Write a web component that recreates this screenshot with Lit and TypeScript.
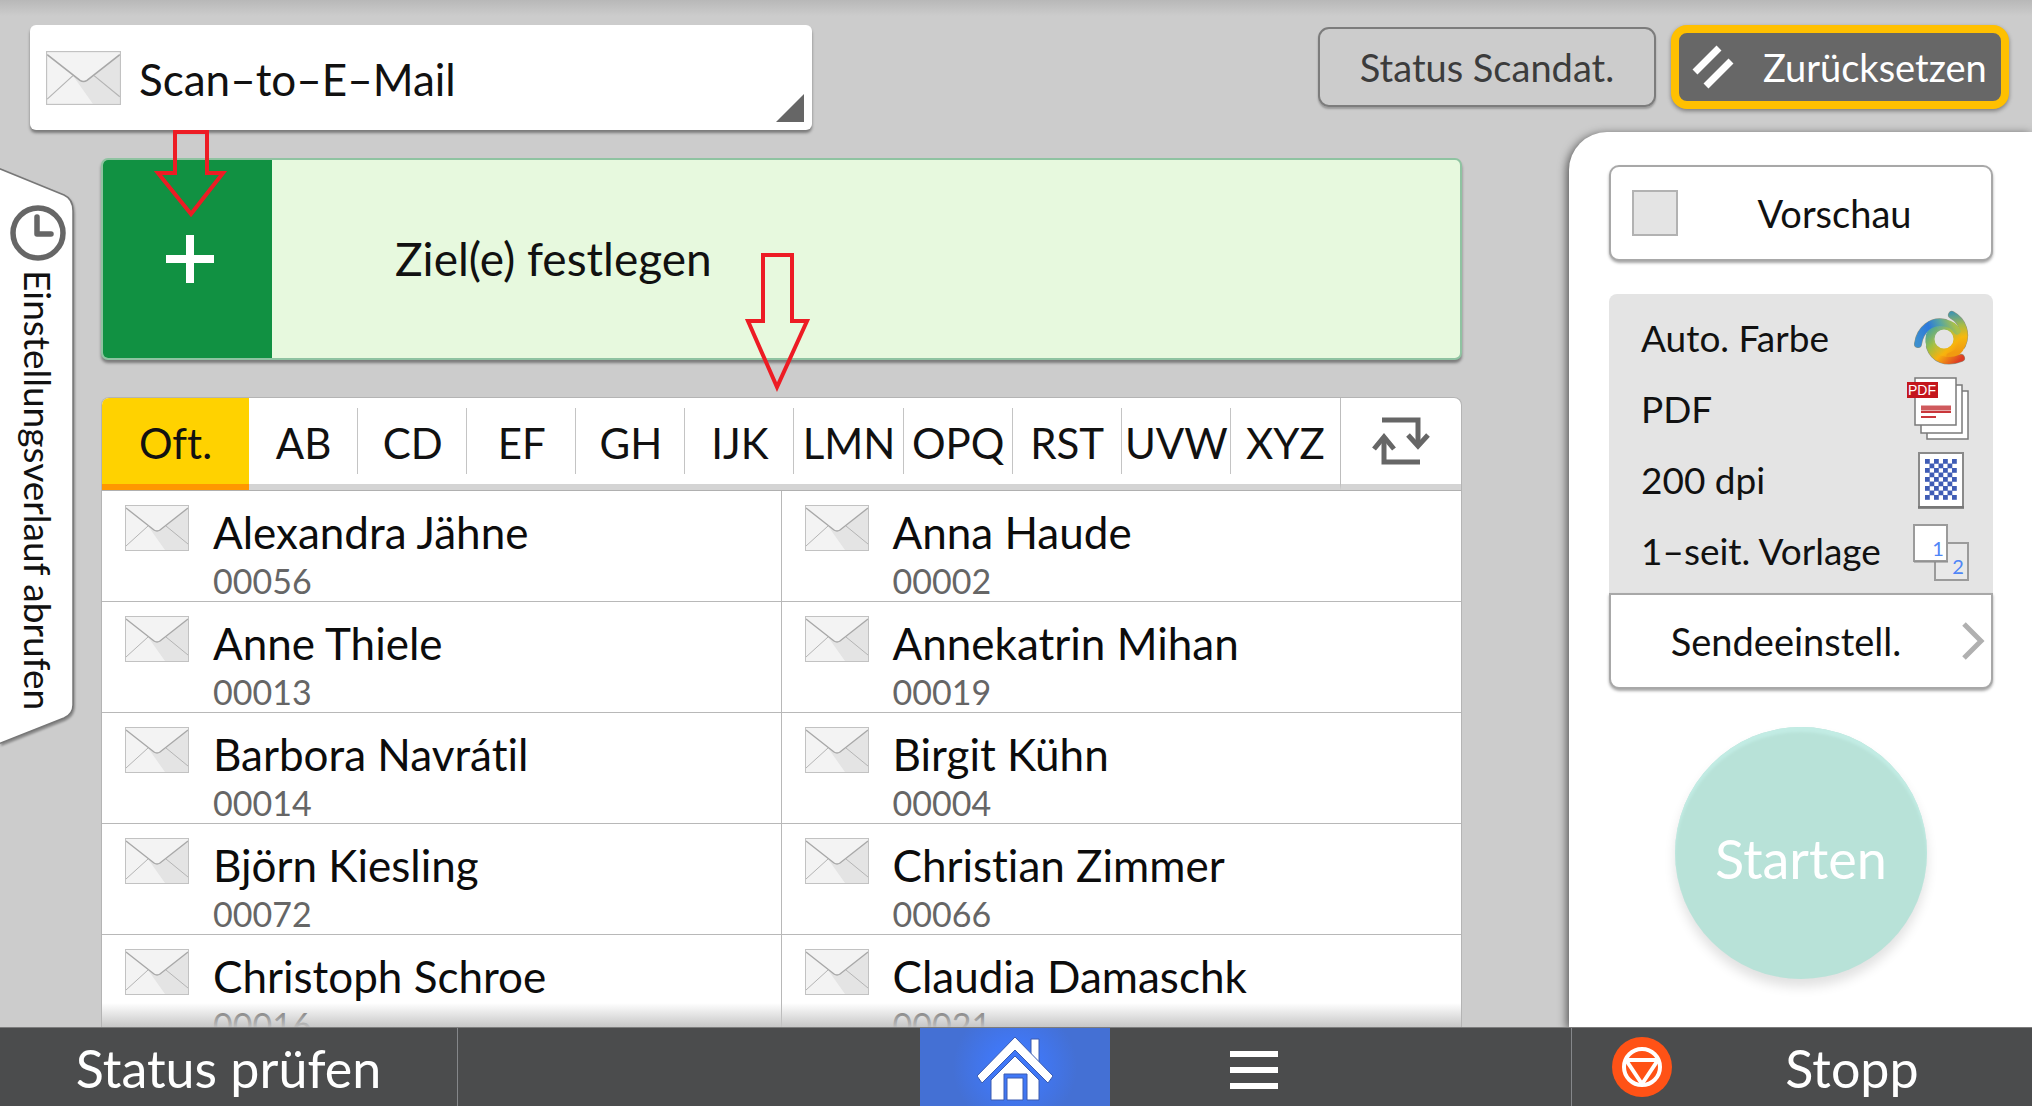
import { LitElement, html, svg, css } from "lit";
import { customElement, state } from "lit/decorators.js";
import { classMap } from "lit/directives/class-map.js";

interface Contact {
  name: string;
  code: string;
}

const CONTACTS: Contact[] = [
  { name: "Alexandra Jähne", code: "00056" },
  { name: "Anna Haude", code: "00002" },
  { name: "Anne Thiele", code: "00013" },
  { name: "Annekatrin Mihan", code: "00019" },
  { name: "Barbora Navrátil", code: "00014" },
  { name: "Birgit Kühn", code: "00004" },
  { name: "Björn Kiesling", code: "00072" },
  { name: "Christian Zimmer", code: "00066" },
  { name: "Christoph Schroe", code: "00016" },
  { name: "Claudia Damaschk", code: "00021" },
];

const TABS = ["Oft.", "AB", "CD", "EF", "GH", "IJK", "LMN", "OPQ", "RST", "UVW", "XYZ"];

const envelope = html`
  <svg class="envelope" viewBox="0 0 64 46" preserveAspectRatio="none" aria-hidden="true">
    <rect x="0.5" y="0.5" width="63" height="45" fill="#f3f3f3" />
    <path d="M23 21 L32 26 L41 21 L63 3 V45 H40 Z" fill="#e4e4e4" />
    <path d="M1 41 L23 21 M63 39 L41 21" fill="none" stroke="#b4b4b4" stroke-width="1" />
    <path d="M1 3 L29 25 Q32 27 35 25 L63 3" fill="none" stroke="#a8a8a8" stroke-width="1.4" />
    <rect x="0.5" y="0.5" width="63" height="45" fill="none" stroke="#c2c2c2" />
  </svg>
`;

const colourIcon = html`
  <svg class="setting-icon" viewBox="0 0 64 64" aria-hidden="true">
    <defs>
      <linearGradient id="ring" gradientUnits="userSpaceOnUse" x1="26" y1="20" x2="50" y2="46">
        <stop offset="0" stop-color="#4aa0b8" />
        <stop offset="0.4" stop-color="#a3c04a" />
        <stop offset="0.8" stop-color="#f8b40c" />
        <stop offset="1" stop-color="#f39a14" />
      </linearGradient>
      <linearGradient id="blue" gradientUnits="userSpaceOnUse" x1="12" y1="38" x2="50" y2="22">
        <stop offset="0" stop-color="#3c8fcf" />
        <stop offset="0.4" stop-color="#2b78dc" />
        <stop offset="0.7" stop-color="#58a6a0" />
        <stop offset="1" stop-color="#a9c04a" />
      </linearGradient>
      <linearGradient id="green" gradientUnits="userSpaceOnUse" x1="45" y1="6" x2="52" y2="46">
        <stop offset="0" stop-color="#3c93b4" />
        <stop offset="0.35" stop-color="#a5bb49" />
        <stop offset="0.65" stop-color="#f6b90e" />
        <stop offset="1" stop-color="#f19a10" />
      </linearGradient>
      <linearGradient id="red" gradientUnits="userSpaceOnUse" x1="22" y1="24" x2="54" y2="54">
        <stop offset="0" stop-color="#4aa3a0" />
        <stop offset="0.3" stop-color="#9cc043" />
        <stop offset="0.6" stop-color="#f8b00e" />
        <stop offset="1" stop-color="#dd3b24" />
      </linearGradient>
    </defs>
    <g fill="none" stroke-linecap="round">
      <g stroke="#8d9480" stroke-width="8">
        <path d="M46 9 C57 15 61 28 56 39" />
        <path d="M55 52 C40 58 28 53 24 41" />
        <path d="M12 38 C14 23 26 14 39 17" />
      </g>
      <circle cx="38" cy="33" r="14" stroke="url(#ring)" stroke-width="9" />
      <g stroke-width="7">
        <path d="M46 9 C57 15 61 28 56 39 C54 44 50 48 44 50" stroke="url(#green)" />
        <path d="M55 52 C40 58 28 53 24 41 C22 34 23 28 28 23" stroke="url(#red)" />
        <path d="M12 38 C14 23 26 14 39 17 C45 18 49 21 51 25" stroke="url(#blue)" />
      </g>
    </g>
    <circle cx="38" cy="33" r="9" fill="#e4e4e4" />
  </svg>
`;

const pdfIcon = html`
  <svg class="setting-icon" viewBox="0 0 64 64" aria-hidden="true">
    <g fill="#fff" stroke="#7a7a7a" stroke-width="1.5">
      <rect x="21" y="14" width="41" height="48" />
      <rect x="15" y="8" width="41" height="48" />
      <rect x="9" y="1" width="41" height="47" />
    </g>
    <path d="M15 31 H45" stroke="#cf5a5d" stroke-width="5" />
    <path d="M15 35 H45 M15 40 H30" stroke="#c9373b" stroke-width="2" />
    <rect x="1" y="5" width="31" height="16" fill="#c4161c" />
    <text class="pdf-mark" x="16" y="18" text-anchor="middle">PDF</text>
  </svg>
`;

const dots = Array.from({ length: 9 * 7 }, (_, i) => ({ c: i % 7, r: Math.floor(i / 7) })).filter(
  (d) => (d.c + d.r) % 2 === 0,
);

const dpiIcon = html`
  <svg class="setting-icon" viewBox="0 0 64 64" aria-hidden="true">
    <rect x="13" y="5" width="44" height="55" fill="#fff" stroke="#8a8a8a" stroke-width="2" />
    <path d="M12 59 H58" stroke="#777" stroke-width="2" />
    ${dots.map(
      (d) => svg`<rect x=${19 + d.c * 4.5} y=${11 + d.r * 4.5} width="4.8" height="4.8" fill="#3f5cb5" />`,
    )}
  </svg>
`;

const sidesIcon = html`
  <svg class="setting-icon" viewBox="0 0 64 64" aria-hidden="true">
    <rect x="29" y="24" width="33" height="37" fill="#e9e9e9" stroke="#9b9b9b" stroke-width="2" />
    <rect x="8" y="6" width="33" height="36" fill="#fff" stroke="#9b9b9b" stroke-width="2" />
    <path d="M8 43 H42" stroke="#888" stroke-width="1" />
    <text class="page-mark" x="32" y="37" text-anchor="middle">1</text>
    <text class="page-mark" x="52" y="55" text-anchor="middle">2</text>
  </svg>
`;

const SETTINGS = [
  { label: "Auto. Farbe", icon: colourIcon },
  { label: "PDF", icon: pdfIcon },
  { label: "200 dpi", icon: dpiIcon },
  { label: "1–seit. Vorlage", icon: sidesIcon },
];

@customElement("app-root")
export class AppRoot extends LitElement {
  @state() private activeTab = TABS[0];

  static styles = css`
    :host {
      display: flex;
      flex-direction: column;
      position: relative;
      height: 100vh;
      overflow: hidden;
      background: linear-gradient(#b8b8b8, #cccccc 16px);
      color: #111;
      font-family: Lato, "Noto Sans", sans-serif;
      font-size: 38px;
      line-height: 46px;
      font-variant-ligatures: none;
    }
    * {
      box-sizing: border-box;
    }
    button,
    select {
      margin: 0;
      padding: 0;
      border: 0;
      background: none;
      color: inherit;
      font: inherit;
      font-variant-ligatures: none;
    }
    svg {
      display: block;
      flex: none;
    }

    .header {
      display: flex;
      align-items: flex-start;
      flex: none;
      height: 132px;
      padding: 25px 23px 0 30px;
    }
    .function {
      display: flex;
      align-items: center;
      position: relative;
      flex: 0 1 782px;
      height: 105px;
      border-radius: 6px;
      background: #fff;
      box-shadow: 0 3px 3px rgba(0, 0, 0, 0.4);
    }
    .function .envelope {
      position: absolute;
      left: 16px;
      width: 75px;
      height: 54px;
    }
    .function-select {
      width: 100%;
      height: 100%;
      padding-top: 2px;
      padding-left: 109px;
      appearance: none;
      font-size: 44px;
      border-radius: 6px;
    }
    .corner {
      position: absolute;
      right: 8px;
      bottom: 8px;
      width: 28px;
      height: 28px;
      background: #666;
      clip-path: polygon(100% 0, 100% 100%, 0 100%);
    }
    .header-actions {
      display: flex;
      gap: 15px;
      margin-left: auto;
    }
    .status-scan {
      width: 338px;
      height: 80px;
      margin-top: 2px;
      border: 2px solid #7c7c7c;
      border-radius: 11px;
      color: #3c3c3c;
      box-shadow: 0 2px 2px rgba(0, 0, 0, 0.25);
    }
    .reset {
      display: flex;
      align-items: center;
      gap: 28px;
      width: 338px;
      height: 84px;
      padding-left: 12px;
      border: 8px solid #ffc000;
      border-radius: 16px;
      background: #676767;
      color: #fff;
      box-shadow: 0 2px 4px rgba(0, 0, 0, 0.4);
    }

    .main {
      display: flex;
      flex: 1;
      min-height: 0;
    }
    .history {
      display: flex;
      align-items: center;
      position: relative;
      flex: none;
      width: 75px;
      height: 580px;
      margin-top: 35px;
      padding-top: 38px;
      writing-mode: vertical-rl;
    }
    .history-shape {
      position: absolute;
      inset: 0;
      filter: drop-shadow(1px 2px 1px rgba(0, 0, 0, 0.35));
    }
    .history-content {
      display: flex;
      align-items: center;
      position: relative;
      width: 72px;
      gap: 9px;
      white-space: nowrap;
      font-size: 37px;
    }

    .content {
      display: flex;
      flex-direction: column;
      gap: 37px;
      flex: 1;
      min-width: 0;
      padding: 26px 107px 0 26px;
    }
    .destination {
      display: flex;
      flex: none;
      height: 202px;
      border: 2px solid #8fc3a1;
      border-radius: 7px;
      overflow: hidden;
      background: #e7f9de;
      box-shadow: 0 3px 3px rgba(0, 0, 0, 0.4);
      text-align: left;
      font-size: 46px;
    }
    .destination-add {
      display: flex;
      align-items: center;
      justify-content: center;
      width: 171px;
      margin: -2px 0 -2px -2px;
      padding-left: 7px;
      background: #119142;
    }
    .destination-label {
      display: flex;
      align-items: center;
      padding-left: 123px;
    }
    .book {
      position: relative;
      flex: 1;
      min-height: 0;
      overflow: hidden;
      border: 1px solid #b4b4b4;
      border-bottom: 0;
      border-radius: 8px 8px 0 0;
      background: #fff;
    }
    .book::after {
      content: "";
      position: absolute;
      inset: auto 0 0 0;
      height: 24px;
      background: linear-gradient(rgba(200, 200, 200, 0), rgba(196, 196, 196, 0.95));
    }
    .tabs {
      display: flex;
      height: 93px;
      border-bottom: 1px solid #b0b0b0;
      font-size: 42px;
      line-height: 53px;
    }
    .tab {
      display: flex;
      align-items: center;
      justify-content: center;
      flex: 1 1 0;
      min-width: 0;
      padding-top: 4px;
      border-bottom: 6px solid #d4d4d4;
      background: linear-gradient(#c4c4c4, #c4c4c4) right center / 1px 66px no-repeat;
    }
    .tab:first-child {
      flex: 0 0 147px;
    }
    .tab.last {
      background: none;
    }
    .tab.active {
      border-bottom-color: #ff9800;
      background: #ffd200;
    }
    .switch {
      display: flex;
      align-items: center;
      justify-content: center;
      flex: none;
      width: 121px;
      border-left: 1px solid #bdbdbd;
      border-bottom: 6px solid #d4d4d4;
    }
    .contacts {
      display: grid;
      grid-template-columns: 1fr 1fr;
    }
    .contact {
      display: flex;
      gap: 24px;
      height: 111px;
      padding: 13px 0 0 23px;
      border-bottom: 1px solid #b8b8b8;
      text-align: left;
    }
    .contact:nth-child(odd) {
      border-right: 1px solid #b8b8b8;
    }
    .contact .envelope {
      width: 64px;
      height: 46px;
      margin-top: 1px;
    }
    .contact-text {
      display: flex;
      flex-direction: column;
      white-space: nowrap;
    }
    .contact-name {
      font-size: 44px;
      line-height: 56px;
      color: #0c0c0c;
    }
    .contact-code {
      font-size: 34px;
      line-height: 42px;
      color: #666;
    }

    .side {
      display: flex;
      flex-direction: column;
      flex: none;
      width: 463px;
      padding: 33px 39px 0 40px;
      border-radius: 38px 0 0 0;
      background: #fff;
      box-shadow: -2px 2px 10px rgba(0, 0, 0, 0.6);
    }
    .preview,
    .send {
      display: flex;
      align-items: center;
      flex: none;
      height: 96px;
      border: 2px solid #a8a8a8;
      border-radius: 10px;
      background: #fff;
      box-shadow: 0 2px 3px rgba(0, 0, 0, 0.35);
    }
    .preview {
      padding-left: 21px;
      margin-bottom: 33px;
    }
    .preview-box {
      flex: none;
      width: 46px;
      height: 46px;
      margin: 0;
      appearance: none;
      border: 2px solid #b2b2b2;
      background: #e4e4e4;
    }
    .preview-label,
    .send-label {
      flex: 1;
      text-align: center;
    }
    .settings {
      margin: 0;
      padding: 8px 23px 7px 32px;
      border-radius: 8px 8px 0 0;
      background: #e4e4e4;
      list-style: none;
    }
    .setting {
      display: flex;
      align-items: center;
      justify-content: space-between;
      height: 71px;
      white-space: nowrap;
      font-size: 37px;
    }
    .setting-icon {
      width: 64px;
      height: 64px;
    }
    .pdf-mark {
      fill: #fff;
      font: 14px "Liberation Sans", sans-serif;
    }
    .page-mark {
      fill: #4f86f7;
      font: 20px Lato, sans-serif;
    }
    .send {
      padding-right: 6px;
      border-radius: 0 0 10px 10px;
    }
    .start {
      align-self: center;
      flex: none;
      width: 252px;
      height: 252px;
      margin-top: 38px;
      padding-top: 10px;
      border-radius: 50%;
      background: #b8e2d8;
      color: #fff;
      font-size: 54px;
      line-height: 65px;
      box-shadow:
        inset 0 5px 3px #c2ece4,
        0 8px 12px rgba(0, 0, 0, 0.12);
    }

    .footer {
      display: flex;
      position: relative;
      flex: none;
      height: 79px;
      border-top: 1px solid #7c7c7c;
      background: #4b4c4d;
      color: #fff;
      font-size: 52px;
      line-height: 64px;
    }
    .footer-status {
      width: 458px;
      padding-top: 2px;
      border-right: 1px solid #85878a;
    }
    .footer-nav {
      display: grid;
      grid-template-columns: 1fr 190px 1fr;
      flex: 1;
    }
    .home {
      display: flex;
      align-items: center;
      justify-content: center;
      grid-column: 2;
      background: radial-gradient(circle at center, #4078f8 20%, #4470d4 62px);
    }
    .menu {
      display: flex;
      flex-direction: column;
      align-items: center;
      justify-content: center;
      gap: 10px;
      width: 288px;
      padding-top: 6px;
    }
    .menu-line {
      width: 48px;
      height: 6px;
      background: #fff;
    }
    .stop {
      display: flex;
      align-items: center;
      width: 461px;
      padding-left: 40px;
      border-left: 1px solid #85878a;
    }
    .stop-label {
      flex: 1;
      padding-top: 2px;
    }

    .pointer {
      position: absolute;
      pointer-events: none;
    }
    .pointer-add {
      left: 154px;
      top: 128px;
    }
    .pointer-list {
      left: 743px;
      top: 251px;
    }
  `;

  render() {
    return html`
      <header class="header">
        <label class="function">
          ${envelope}
          <select class="function-select" aria-label="Funktion">
            <option>Scan–to–E–Mail</option>
          </select>
          <span class="corner"></span>
        </label>
        <div class="header-actions">
          <button class="status-scan">Status Scandat.</button>
          <button class="reset">
            <svg width="44" height="46" viewBox="0 0 44 46" aria-hidden="true">
              <path d="M4 28 L28 4 M15 42 L40 17" stroke="#fff" stroke-width="7" />
            </svg>
            <span>Zurücksetzen</span>
          </button>
        </div>
      </header>

      <main class="main">
        <button class="history">
          <svg class="history-shape" width="75" height="580" viewBox="0 0 75 580" aria-hidden="true">
            <path
              d="M-2 1 L64 28 Q73 32 73 44 V538 Q73 547 64 551 L-2 577 Z"
              fill="#fff"
              stroke="#777"
              stroke-width="1.5"
            />
          </svg>
          <span class="history-content">
            <svg width="56" height="56" viewBox="0 0 56 56" aria-hidden="true">
              <circle cx="28" cy="28" r="25" fill="none" stroke="#666" stroke-width="5.5" />
              <path
                d="M27 12 V29 H41"
                fill="none"
                stroke="#666"
                stroke-width="5.5"
                stroke-linecap="round"
                stroke-linejoin="round"
              />
            </svg>
            <span>Einstellungsverlauf abrufen</span>
          </span>
        </button>

        <section class="content">
          <button class="destination">
            <span class="destination-add">
              <svg width="48" height="48" viewBox="0 0 48 48" aria-hidden="true">
                <path d="M24 0 V48 M0 24 H48" stroke="#fff" stroke-width="8" />
              </svg>
            </span>
            <span class="destination-label">Ziel(e) festlegen</span>
          </button>

          <div class="book">
            <div class="tabs">
              ${TABS.map(
                (tab, i) => html`
                  <button
                    class=${classMap({
                      tab: true,
                      active: tab === this.activeTab,
                      last: i === TABS.length - 1,
                    })}
                    @click=${() => (this.activeTab = tab)}
                  >
                    ${tab}
                  </button>
                `,
              )}
              <button class="switch" aria-label="Ansicht wechseln">
                <svg width="58" height="50" viewBox="0 0 58 50" aria-hidden="true">
                  <g fill="none" stroke="#666" stroke-width="5">
                    <path d="M10 4 H46 V27" />
                    <path d="M48 46 H12 V23" />
                    <path d="M36 19 L46 30 L56 19" />
                    <path d="M2 33 L12 21 L22 33" />
                  </g>
                </svg>
              </button>
            </div>
            <div class="contacts">
              ${CONTACTS.map(
                (c) => html`
                  <button class="contact">
                    ${envelope}
                    <span class="contact-text">
                      <span class="contact-name">${c.name}</span>
                      <span class="contact-code">${c.code}</span>
                    </span>
                  </button>
                `,
              )}
            </div>
          </div>
        </section>

        <aside class="side">
          <label class="preview">
            <input class="preview-box" type="checkbox" />
            <span class="preview-label">Vorschau</span>
          </label>
          <ul class="settings">
            ${SETTINGS.map(
              (s) => html`<li class="setting"><span>${s.label}</span>${s.icon}</li>`,
            )}
          </ul>
          <button class="send">
            <span class="send-label">Sendeeinstell.</span>
            <svg width="24" height="40" viewBox="0 0 24 40" aria-hidden="true">
              <path d="M3 3 L20 20 L3 37" fill="none" stroke="#b0b0b0" stroke-width="5" />
            </svg>
          </button>
          <button class="start">Starten</button>
        </aside>
      </main>

      <footer class="footer">
        <button class="footer-status">Status prüfen</button>
        <nav class="footer-nav">
          <button class="home" aria-label="Startseite">
            <svg width="76" height="76" viewBox="0 0 76 76" aria-hidden="true">
              <g fill="#fff" stroke="#3a5bb0" stroke-width="1">
                <path d="M54 10 H62 V37 L54 29 Z" />
                <path d="M38 8 L76 47 L71 54 L38 21 L5 54 L0 47 Z" />
                <path d="M38 27 L62 51 V71 H50 V45 H27 V71 H14 V51 Z" />
                <path d="M30 49 H46 V71 H30 Z" />
              </g>
            </svg>
          </button>
          <button class="menu" aria-label="Menü">
            <span class="menu-line"></span>
            <span class="menu-line"></span>
            <span class="menu-line"></span>
          </button>
        </nav>
        <button class="stop">
          <svg width="60" height="60" viewBox="0 0 60 60" aria-hidden="true">
            <circle cx="30" cy="30" r="30" fill="#ff5216" />
            <circle cx="30" cy="30" r="18" fill="none" stroke="#fff" stroke-width="4" />
            <path d="M14 23 H46 L30 47 Z" fill="none" stroke="#fff" stroke-width="4" stroke-linejoin="round" />
          </svg>
          <span class="stop-label">Stopp</span>
        </button>
      </footer>

      <svg class="pointer pointer-add" width="74" height="94" viewBox="0 0 74 94" aria-hidden="true">
        <path
          d="M21 4 H53 V45 H69 L37 86 L4 45 H21 Z"
          fill="none"
          stroke="#ed1c24"
          stroke-width="4"
        />
      </svg>
      <svg class="pointer pointer-list" width="70" height="146" viewBox="0 0 70 146" aria-hidden="true">
        <path
          d="M20 4 H49 V70 H64 L34 136 L5 70 H20 Z"
          fill="none"
          stroke="#ed1c24"
          stroke-width="4"
        />
      </svg>
    `;
  }
}
